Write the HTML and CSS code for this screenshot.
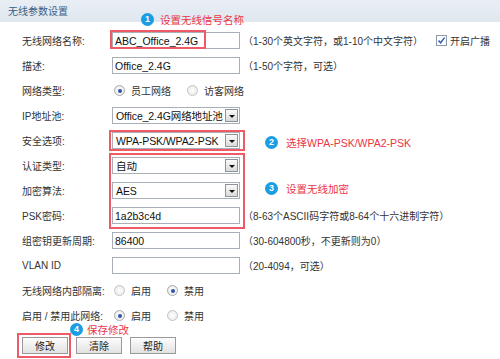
FILE: index.html
```html
<!DOCTYPE html>
<html lang="zh-CN">
<head>
    <meta charset="UTF-8">
    <title>无线参数设置</title>
    <link rel="stylesheet" href="styles.css">
</head>
<body>
<div class="panel">
    <div class="panel-title">无线参数设置</div>

    <form class="wlan-form">
        <div class="row">
            <span class="label">无线网络名称:</span>
            <input class="txt" type="text" value="ABC_Office_2.4G">
            <span class="hint">（1-30个英文字符，或1-10个中文字符）</span>
            <span class="check"><span class="check-box"><svg width="9" height="9" viewBox="0 0 9 9"><path d="M1.5 4.5 L3.6 6.8 L7.6 1.6" fill="none" stroke="#2d58b0" stroke-width="1.4"/></svg></span>开启广播</span>
        </div>
        <div class="row">
            <span class="label">描述:</span>
            <input class="txt" type="text" value="Office_2.4G">
            <span class="hint">（1-50个字符，可选）</span>
        </div>
        <div class="row">
            <span class="label">网络类型:</span>
            <div class="radios">
                <span class="opt"><span class="radio on"></span>员工网络</span>
                <span class="opt"><span class="radio"></span>访客网络</span>
            </div>
        </div>
        <div class="row">
            <span class="label">IP地址池:</span>
            <div class="select"><span>Office_2.4G网络地址池</span><span class="arrow"></span></div>
        </div>
        <div class="row">
            <span class="label">安全选项:</span>
            <div class="select"><span>WPA-PSK/WPA2-PSK</span><span class="arrow"></span></div>
        </div>
        <div class="row">
            <span class="label">认证类型:</span>
            <div class="select"><span>自动</span><span class="arrow"></span></div>
        </div>
        <div class="row">
            <span class="label">加密算法:</span>
            <div class="select"><span>AES</span><span class="arrow"></span></div>
        </div>
        <div class="row">
            <span class="label">PSK密码:</span>
            <input class="txt" type="text" value="1a2b3c4d">
            <span class="hint">（8-63个ASCII码字符或8-64个十六进制字符）</span>
        </div>
        <div class="row">
            <span class="label">组密钥更新周期:</span>
            <input class="txt" type="text" value="86400">
            <span class="hint">（30-604800秒，不更新则为0）</span>
        </div>
        <div class="row">
            <span class="label">VLAN ID</span>
            <input class="txt" type="text" value="">
            <span class="hint">（20-4094，可选）</span>
        </div>
        <div class="row">
            <span class="label">无线网络内部隔离:</span>
            <div class="radios">
                <span class="opt"><span class="radio"></span>启用</span>
                <span class="opt"><span class="radio on"></span>禁用</span>
            </div>
        </div>
        <div class="row">
            <span class="label">启用 / 禁用此网络:</span>
            <div class="radios">
                <span class="opt"><span class="radio on"></span>启用</span>
                <span class="opt"><span class="radio"></span>禁用</span>
            </div>
        </div>

        <div class="actions">
            <button type="button" class="btn">修改</button>
            <button type="button" class="btn">清除</button>
            <button type="button" class="btn">帮助</button>
        </div>
    </form>

    <!-- 标注 -->
    <div class="mark mark-ssid"></div>
    <div class="mark mark-sec"></div>
    <div class="mark mark-enc"></div>
    <div class="mark mark-save"></div>

    <div class="note note-1"><span class="badge">1</span>设置无线信号名称</div>
    <div class="note note-2"><span class="badge">2</span>选择WPA-PSK/WPA2-PSK</div>
    <div class="note note-3"><span class="badge">3</span>设置无线加密</div>
    <div class="note note-4"><span class="badge">4</span>保存修改</div>
</div>
</body>
</html>
```

FILE: styles.css
```css
body {
    margin: 0;
    font-family: "Liberation Sans", "Noto Sans CJK SC", sans-serif;
    font-size: 10px;
    color: #333;
    background: #fff;
}
.panel {
    position: relative;
    width: 500px;
    height: 359px;
    overflow: hidden;
}
.panel-title {
    height: 22px;
    line-height: 23px;
    padding-left: 8px;
    background: linear-gradient(#e8eef4, #dfe7ef);
    color: #3a5f86;
}
.wlan-form {
    padding: 6px 10px 0 22px;
}
.row {
    display: flex;
    align-items: center;
    height: 25px;
    white-space: nowrap;
}
.label {
    width: 90px;
    flex: none;
}
.txt {
    box-sizing: border-box;
    width: 128px;
    height: 17px;
    margin: 0;
    padding: 0 2px;
    border: 1px solid #a8afb7;
    font: 10.5px "Liberation Sans", "Noto Sans CJK SC", sans-serif;
    color: #111;
    outline: none;
}
.hint {
    margin-left: 3px;
}
.check {
    display: flex;
    align-items: center;
    gap: 3px;
    margin-left: auto;
}
.check-box {
    width: 9px;
    height: 9px;
    border: 1px solid #8f9aa8;
    background: #fff;
    display: flex;
}
.radios {
    display: flex;
    gap: 16px;
    padding-left: 2px;
}
.opt {
    display: flex;
    align-items: center;
    gap: 6px;
}
.radio {
    position: relative;
    box-sizing: border-box;
    width: 11px;
    height: 11px;
    border-radius: 50%;
    border: 1px solid #c4c4c4;
    background: radial-gradient(#ffffff, #e6e6e6);
}
.radio.on {
    border-color: #a9a9a9;
}
.radio.on::after {
    content: "";
    position: absolute;
    left: 2.5px;
    top: 2.5px;
    width: 4px;
    height: 4px;
    border-radius: 50%;
    background: #2b55a6;
}
.select {
    box-sizing: border-box;
    width: 128px;
    height: 17px;
    border: 1px solid #a8afb7;
    display: flex;
    align-items: center;
    padding-left: 3px;
    font-size: 10.5px;
    letter-spacing: -0.1px;
    color: #111;
    overflow: hidden;
}
.select .arrow {
    box-sizing: border-box;
    flex: none;
    width: 13px;
    height: 13px;
    margin-left: auto;
    margin-right: 1px;
    border: 1px solid #8d949c;
    background: linear-gradient(#fbfbfb, #dadada);
    display: flex;
    align-items: center;
    justify-content: center;
}
.select .arrow::after {
    content: "";
    border-left: 3px solid transparent;
    border-right: 3px solid transparent;
    border-top: 3px solid #111;
    margin-top: 1px;
}
.actions {
    display: flex;
    gap: 8px;
    margin-top: 9px;
}
.btn {
    width: 46px;
    height: 17px;
    padding: 0;
    border: 1px solid #9a9a9a;
    background: linear-gradient(#fdfdfd, #e2e2e2);
    font: 10px "Liberation Sans", "Noto Sans CJK SC", sans-serif;
    color: #222;
}
.mark {
    position: absolute;
    box-sizing: border-box;
    border: 2px solid #ee5b67;
}
.mark-ssid {
    left: 110px;
    top: 30px;
    width: 96px;
    height: 19px;
}
.mark-sec {
    left: 109px;
    top: 130px;
    width: 136px;
    height: 21px;
}
.mark-enc {
    left: 109px;
    top: 153px;
    width: 136px;
    height: 76px;
}
.mark-save {
    left: 17px;
    top: 333px;
    width: 54px;
    height: 25px;
}
.note {
    position: absolute;
    display: flex;
    align-items: center;
    gap: 6px;
    color: #eb3546;
    font-size: 10.5px;
    white-space: nowrap;
}
.badge {
    width: 13px;
    height: 13px;
    border-radius: 50%;
    background: #1a9de2;
    color: #fff;
    font-weight: bold;
    font-size: 9px;
    line-height: 13px;
    text-align: center;
}
.note-1 {
    left: 141px;
    top: 12px;
}
.note-2 {
    left: 265px;
    top: 135px;
    gap: 8px;
}
.note-3 {
    left: 265px;
    top: 181px;
    gap: 8px;
}
.note-4 {
    left: 70px;
    top: 322px;
    gap: 4px;
}
```
